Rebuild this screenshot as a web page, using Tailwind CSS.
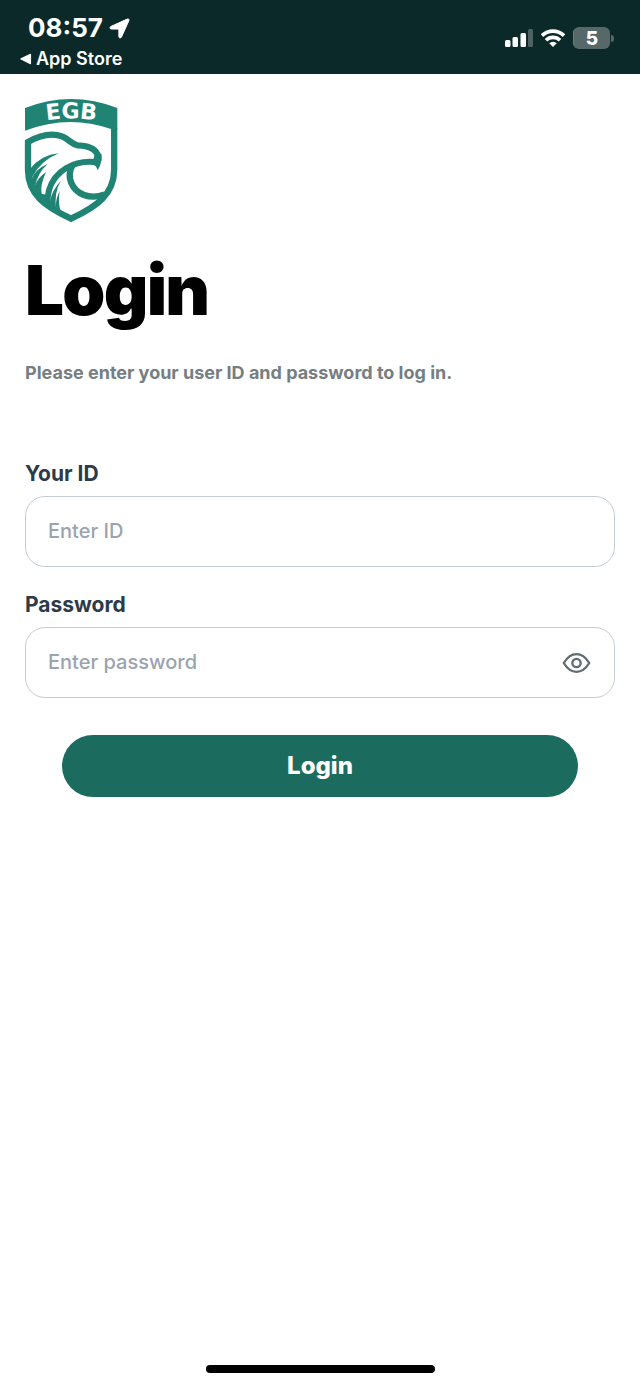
<!DOCTYPE html>
<html lang="en">
<head>
    <meta charset="UTF-8">
    <meta name="viewport" content="width=device-width, initial-scale=1.0">
    <title>Login</title>
    <script src="https://cdn.jsdelivr.net/npm/@tailwindcss/browser@4"></script>
</head>
<body class="flex min-h-screen flex-col bg-white font-[Inter,sans-serif]">
    <!-- Status Bar -->
    <header class="flex h-[74px] items-start justify-between bg-[#0b2928] text-white">
        <div class="pt-3 pl-5">
            <div class="flex items-center gap-1.5 pl-2">
                <span class="text-[26px] leading-8 font-bold">08:57</span>
                <svg class="size-[21px]" viewBox="0 0 22 22" fill="currentColor" stroke="currentColor" stroke-width="1" stroke-linejoin="round">
                    <path d="M19.2 1.1 2 8.8c-1.6.8-1.2 2.8.5 2.8h7.2c.4 0 .6.2.6.6v7.2c0 1.7 2 2.1 2.8.5L20.8 2.8c.6-1.3-.3-2.2-1.6-1.7z"/>
                </svg>
            </div>
            <a href="#" class="flex items-center gap-1 text-[18px] leading-[30px] font-semibold">
                <svg class="h-3 w-3" viewBox="0 0 12 12" fill="currentColor"><path d="M10.2.7.8 5.2c-.7.4-.7 1 0 1.4l9.4 4.6c.5.2.9 0 .9-.6V1.3c0-.6-.4-.8-.9-.6z"/></svg>
                App Store
            </a>
        </div>
        <div class="flex items-center gap-2 pt-[27px] pr-[26px]">
            <svg class="h-[18px] w-7" viewBox="0 0 28 18" fill="currentColor">
                <rect x="0" y="11" width="5.5" height="7" rx="1.5"/>
                <rect x="7.5" y="8" width="5.5" height="10" rx="1.5"/>
                <rect x="15.5" y="4" width="5.5" height="14" rx="1.5"/>
                <rect x="23" y="0" width="5" height="18" rx="1.5" opacity=".27"/>
            </svg>
            <svg class="h-[18px] w-6" viewBox="0 0 24 18" fill="none" stroke="currentColor" stroke-width="3.6">
                <path d="M1 6.6a15.8 15.8 0 0 1 22 0M5 11.2a10 10 0 0 1 14 0"/>
                <path d="M12 18 8.2 14.3a5.4 5.4 0 0 1 7.6 0z" fill="currentColor" stroke="none"/>
            </svg>
            <div class="flex items-center gap-px">
                <div class="h-[22px] w-[37px] overflow-hidden rounded-md bg-[#566867]">
                    <div class="h-full border-l border-[#f0483e] text-center text-[19px] leading-[23px] font-extrabold">5</div>
                </div>
                <div class="h-[7px] w-[3px] rounded-r-full bg-[#566867]"></div>
            </div>
        </div>
    </header>

    <main class="flex-1 px-[25px] pt-[25px]">
        <!-- Logo -->
        <svg class="h-[125px] w-[93px] overflow-visible" viewBox="45 42 279 375" role="img" aria-label="EGB">
            <path d="M45 69Q183 15 322 69V132H303Q175 87 45 137z" fill="#1f8474"/>
            <g fill="none" stroke="#1f8474" stroke-width="19">
                <path d="M312.5 128V255C312 328 260 365 183 401C106 365 54 328 54 255V171C98 146 135 146 158 155C180 165 184 178 203 181C244 182 267 197 265 227"/>
                <path d="M262 232C190 223 134 259 117 315Q112 335 112 358" stroke-width="18"/>
                <path d="M188 240C167 276 186 316 222 330Q252 341 284 328"/>
            </g>
            <g fill="#1f8474">
                <path d="M256 205 275 207Q276 235 263 256 259 240 245 238z"/>
                <path d="M146 205Q93 210 60 252V292L68 274Q92 228 146 205z"/>
                <path d="M113 237Q76 252 64 282V320L75 304Q84 262 113 237z"/>
                <path d="M108 262Q86 276 74 302L70 325 108 358 112 330 95 326Q90 300 108 262z"/>
                <path d="M153 287Q126 314 119 352L118 364 138 374Q132 320 153 287z"/>
                <path d="M149 318Q137 342 137 366L151 378Q144 348 149 318z"/>
            </g>
            <path id="banner" d="M70 114Q183 87 298 114" fill="none"/>
            <text class="font-['DejaVu_Sans',sans-serif] text-[66px] font-bold" fill="#fff" text-anchor="middle"><textPath href="#banner" startOffset="50%">EGB</textPath></text>
        </svg>

        <h1 class="mt-6 text-[69px] leading-[84px] font-black tracking-tight text-black">Login</h1>
        <p class="mt-[29px] text-[18px] leading-6 font-bold text-[#757e83]">Please enter your user ID and password to log in.</p>

        <!-- Login Form -->
        <form class="mt-[75px]">
            <label for="userId" class="block text-[21px] leading-7 font-bold text-[#2d3b49]">Your ID</label>
            <input id="userId" type="text" placeholder="Enter ID" class="mt-2 h-[71px] w-full rounded-[20px] border border-[#c5ccd4] px-[22px] pb-0.5 text-[20px] font-medium placeholder:text-[#9ba3ae]">

            <label for="password" class="mt-6 block text-[21px] leading-7 font-bold text-[#2d3b49]">Password</label>
            <div class="relative mt-2">
                <input id="password" type="password" placeholder="Enter password" class="h-[71px] w-full rounded-[20px] border border-[#c5ccd4] pr-16 pb-0.5 pl-[22px] text-[20px] font-medium placeholder:text-[#9ba3ae]">
                <button type="button" aria-label="Show password" onclick="togglePassword()" class="absolute inset-y-0 right-6 text-[#5f6d72]">
                    <svg class="h-[22px] w-[29px]" viewBox="0 0 30 22" fill="none" stroke="currentColor" stroke-width="2.4" stroke-linejoin="round">
                        <path d="M1.8 11C5.5 5 9.5 1.8 15 1.8S24.5 5 28.2 11C24.5 17 20.5 20.2 15 20.2S5.5 17 1.8 11z"/>
                        <circle cx="15" cy="11" r="4.3"/>
                    </svg>
                </button>
            </div>

            <div class="mt-[37px] px-[37px]">
                <button type="submit" class="h-[62px] w-full rounded-full bg-[#1c6b5f] text-[24px] font-extrabold text-white">Login</button>
            </div>
        </form>
    </main>

    <!-- Home Indicator -->
    <div class="mx-auto mb-3 h-2 w-[229px] rounded-full bg-black"></div>

    <script>
        function togglePassword() {
            let input = document.getElementById("password");
            input.type = input.type === "password" ? "text" : "password";
        }
    </script>
</body>
</html>
